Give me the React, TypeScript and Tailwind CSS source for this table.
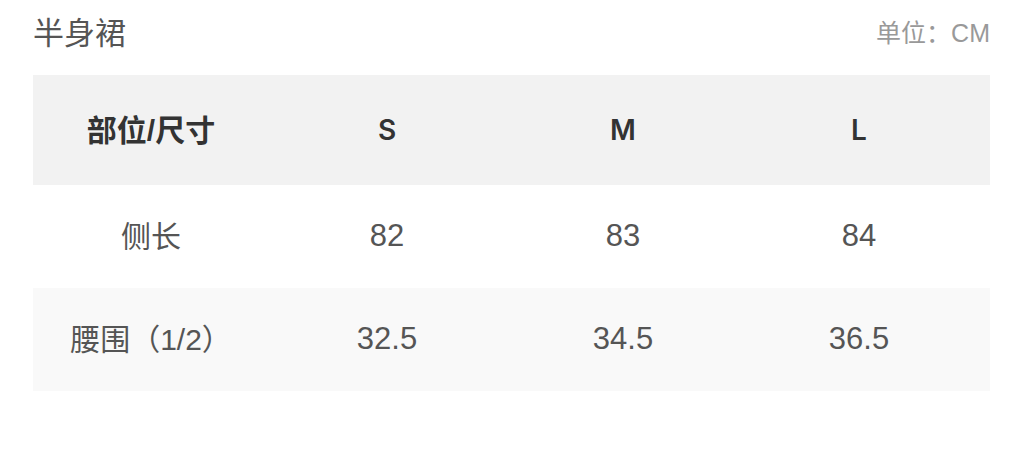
const rows = [
  { name: '侧长', values: ['82', '83', '84'] },
  { name: '腰围（1/2）', values: ['32.5', '34.5', '36.5'] },
]

const sizes = ['S', 'M', 'L']

const App = () => {
  return (
    <div
      className="w-[1024px] h-[472px] bg-white px-[33px] pt-[14px]"
      style={{ fontFamily: '"Liberation Sans", "Noto Sans CJK SC", sans-serif' }}
    >
      <div className="flex items-center justify-between h-[40px] pr-[1px]">
        <span className="text-[31px] text-[#555]">半身裙</span>
        <span className="text-[25px] text-[#999]">单位：CM</span>
      </div>
      <div className="mt-[21px] w-[957px]">
        <div className="grid grid-cols-[236px_236px_236px_236px] h-[110px] items-center bg-[#f2f2f2] text-[#333]">
          <div className="text-center text-[30px] font-semibold">部位/尺寸</div>
          {sizes.map((s) => (
            <div key={s} className="text-center text-[28px] font-semibold font-[Inter]">{s}</div>
          ))}
        </div>
        {rows.map((r, i) => (
          <div
            key={r.name}
            className={`grid grid-cols-[236px_236px_236px_236px] h-[103px] items-center text-[#555] ${i % 2 === 1 ? 'bg-[#f9f9f9]' : 'bg-white'}`}
          >
            <div className="text-center text-[30px]">{r.name}</div>
            {r.values.map((v, j) => (
              <div key={j} className="text-center text-[31px]">{v}</div>
            ))}
          </div>
        ))}
      </div>
    </div>
  )
}

export default App
